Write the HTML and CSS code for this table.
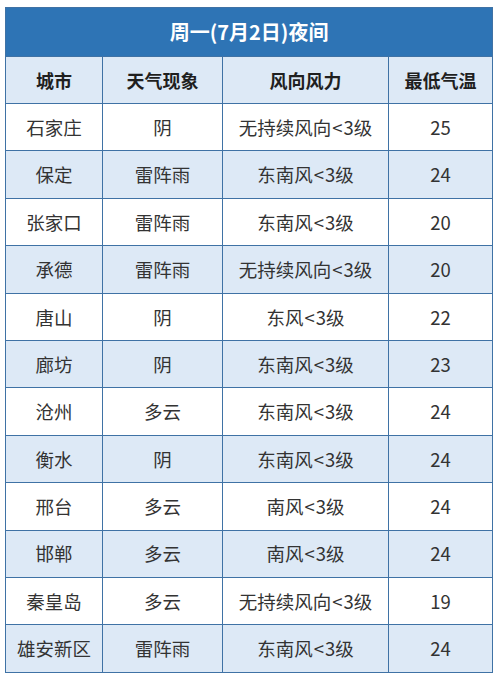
FILE: index.html
```html
<!DOCTYPE html>
<html lang="zh-CN">
<head>
<meta charset="utf-8">
<title>周一(7月2日)夜间</title>
<link rel="stylesheet" href="styles.css">
</head>
<body>
<table class="weather">
  <colgroup>
    <col class="c1"><col class="c2"><col class="c3"><col class="c4">
  </colgroup>
  <thead>
    <tr class="title-row"><th colspan="4">周一(7月2日)夜间</th></tr>
    <tr class="head-row"><th>城市</th><th>天气现象</th><th>风向风力</th><th>最低气温</th></tr>
  </thead>
  <tbody>
    <tr><td>石家庄</td><td>阴</td><td>无持续风向<span class="lt">&lt;</span>3级</td><td>25</td></tr>
    <tr><td>保定</td><td>雷阵雨</td><td>东南风<span class="lt">&lt;</span>3级</td><td>24</td></tr>
    <tr><td>张家口</td><td>雷阵雨</td><td>东南风<span class="lt">&lt;</span>3级</td><td>20</td></tr>
    <tr><td>承德</td><td>雷阵雨</td><td>无持续风向<span class="lt">&lt;</span>3级</td><td>20</td></tr>
    <tr><td>唐山</td><td>阴</td><td>东风<span class="lt">&lt;</span>3级</td><td>22</td></tr>
    <tr><td>廊坊</td><td>阴</td><td>东南风<span class="lt">&lt;</span>3级</td><td>23</td></tr>
    <tr><td>沧州</td><td>多云</td><td>东南风<span class="lt">&lt;</span>3级</td><td>24</td></tr>
    <tr><td>衡水</td><td>阴</td><td>东南风<span class="lt">&lt;</span>3级</td><td>24</td></tr>
    <tr><td>邢台</td><td>多云</td><td>南风<span class="lt">&lt;</span>3级</td><td>24</td></tr>
    <tr><td>邯郸</td><td>多云</td><td>南风<span class="lt">&lt;</span>3级</td><td>24</td></tr>
    <tr><td>秦皇岛</td><td>多云</td><td>无持续风向<span class="lt">&lt;</span>3级</td><td>19</td></tr>
    <tr><td>雄安新区</td><td>雷阵雨</td><td>东南风<span class="lt">&lt;</span>3级</td><td>24</td></tr>
  </tbody>
</table>
</body>
</html>
```
FILE: styles.css
```css
html, body {
  margin: 0;
  padding: 0;
  background: #ffffff;
}
body {
  padding: 7px 0 0 5px;
  font-family: "Noto Sans CJK SC", "Noto Sans", sans-serif;
  color: #2b2b2b;
}
.weather {
  border-collapse: collapse;
  table-layout: fixed;
  width: 487px;
  font-size: 18.5px;
}
.c1 { width: 97px; }
.c2 { width: 120px; }
.c3 { width: 166px; }
.c4 { width: 104px; }
.weather th,
.weather td {
  border: 1.5px solid #3f72a5;
  text-align: center;
  vertical-align: middle;
  padding: 0;
  line-height: 1;
}
.title-row th {
  background: #2e74b5;
  color: #ffffff;
  height: 48px;
  font-size: 20px;
  font-weight: 700;
}
.head-row th {
  background: #dde9f6;
  color: #1f1f1f;
  height: 46px;
  font-size: 18px;
  font-weight: 700;
}
.weather td {
  height: 46.4px;
  font-weight: 400;
  color: #333333;
}
.lt {
  margin: 0 1px;
}
.weather tbody tr:nth-child(even) td {
  background: #dde9f6;
}
```
